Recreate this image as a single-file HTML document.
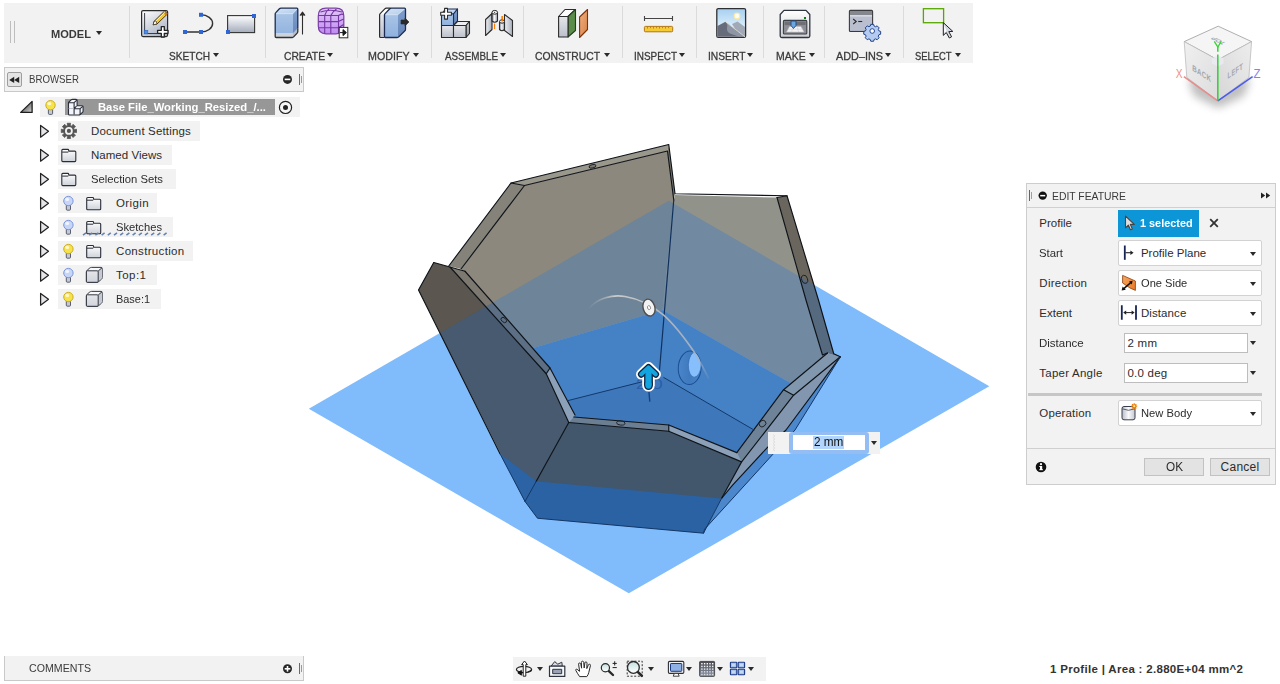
<!DOCTYPE html>
<html><head><meta charset="utf-8"><title>Fusion 360 - Edit Feature</title>
<style>
html,body{margin:0;padding:0;background:#fff;}
body{width:1280px;height:684px;position:relative;overflow:hidden;font-family:"Liberation Sans",sans-serif;}
.t{position:absolute;white-space:nowrap;line-height:16px;height:16px;font-family:"Liberation Sans",sans-serif;}
.abs{position:absolute;}
.panel{position:absolute;background:#f2f2f2;}
.sep{position:absolute;width:1.5px;background:#dbdbdb;top:6px;height:52px;margin-left:-0.25px;}
.arr{position:absolute;width:0;height:0;border-left:3px solid transparent;border-right:3px solid transparent;border-top:4px solid #2a2a2a;}
.rowbg{position:absolute;background:#f2f2f2;height:20px;}
.dd{position:absolute;background:#fff;border:1px solid #d2d2d2;border-radius:2px;box-sizing:border-box;}
.inp{position:absolute;background:#fff;border:1px solid #bdbdbd;box-sizing:border-box;}
.btn{position:absolute;background:#e3e3e3;border:1px solid #c2c2c2;box-sizing:border-box;}
svg{position:absolute;overflow:visible;}
</style></head>
<body>
<!-- canvas -->
<svg style="left:0;top:0" width="1280" height="684" viewBox="0 0 1280 684">
<defs>
<clipPath id="pl"><polygon points="668.8,200.7 989.3,386.2 628.8,593.3 308.8,408.8"/></clipPath>
</defs>
<polygon points="668.8,200.7 989.3,386.2 628.8,593.3 308.8,408.8" fill="#80bbfb"/>
<!-- ===== outside-plane colours ===== -->
<g stroke-linejoin="round">
<!-- back-left wall inner face -->
<polygon points="524.5,185.5 667.5,151 673.75,200 662.5,310 533,348 461,269" fill="#8c887d"/>
<!-- back-left top rim -->
<polygon points="511,183 668.75,144.5 667.5,151 524.5,185.5" fill="#9a978d"/>
<!-- back-left left rim -->
<polygon points="511,183 524.5,185.5 461,269 448.75,266" fill="#85827a"/>
<!-- back-left right end face -->
<polygon points="668.75,144.5 675,193.75 673.75,200 667.5,151" fill="#7d7a71"/>
<!-- back-right wall inner face -->
<polygon points="673.75,200 675,195 777,197.5 806.25,301 822.5,355 827.5,353 791.4,383.6 662.5,310" fill="#91938b"/>
<!-- back-right end face -->
<polygon points="787,195.75 818.75,301 833.75,353.75 840.3,356.8 827.5,353 822.5,355 806.25,301 777,197.5" fill="#6b665d"/>
<!-- left-front outer panel -->
<polygon points="433.75,262.5 450,267 546.25,373.75 568.75,422.5 536.25,481.25 525,501.5 418.5,290" fill="#5b564f"/>
<!-- left-front rim top -->
<polygon points="450,267 465,271.25 550,368 546.25,373.75" fill="#7d7970"/>
</g>
<!-- ===== inside-plane colours ===== -->
<g clip-path="url(#pl)">
<polygon points="524.5,185.5 667.5,151 673.75,200 662.5,310 533,348 461,269" fill="#6e8499"/>
<polygon points="673.75,200 675,195 777,197.5 806.25,301 822.5,355 827.5,353 791.4,383.6 662.5,310" fill="#7189a1"/>
<polygon points="787,195.75 818.75,301 833.75,353.75 840.3,356.8 827.5,353 822.5,355 806.25,301 777,197.5" fill="#55697f"/>
<polygon points="433.75,262.5 450,267 546.25,373.75 568.75,422.5 536.25,481.25 525,501.5 418.5,290" fill="#475a70"/>
<polygon points="450,267 465,271.25 550,368 546.25,373.75" fill="#5c6f85"/>
<!-- floor -->
<polygon points="662.5,310 791.4,383.6 736.8,452.6 668.75,425 573.75,417 575,415 550,368 533,348" fill="#4581c5"/>
<polygon points="567.4,400.75 659,377.5 663.75,377.5 754,430 736.8,452.6 668.75,425 573.75,417" fill="#3e78bb"/>
<!-- chamfer left -->
<polygon points="546.25,373.75 550,368 575,415 573.75,417 568.75,422.5" fill="#8ca0b8"/>
<!-- front rim -->
<polygon points="568.75,422.5 573.75,417 668.75,425 668.75,431.25" fill="#6b7e92"/>
<polygon points="668.75,425 736.8,452.6 741.6,461.9 668.75,431.25" fill="#8ca0b8"/>
<!-- front panel -->
<polygon points="568.75,422.5 668.75,431.25 741.6,461.9 721.5,498.5 715,510 530.3,492 536.25,481.25" fill="#42566c"/>
<polygon points="536.25,481.25 721.5,498.5 703.5,533.2 537.5,518.25 525,501.5" fill="#2a62a3"/>
<polygon points="500,453.75 536.25,481.25 525,501.5" fill="#2b63a5"/>
<!-- right-front rim -->
<polygon points="827.5,353 840.3,356.8 793.6,395.2 783.6,389.7" fill="#8197ae"/>
<polygon points="783.6,389.7 793.6,395.2 741.6,461.9 736.8,452.6" fill="#6f8398"/>
<polygon points="840.3,356.8 795,430 772.6,454.6 704.6,529.2 703.5,533.2 721.5,498.5 741.6,461.9 793.6,395.2" fill="#4c87cb"/>
<polygon points="840.3,356.8 793.6,395.2 741.6,461.9 721.5,498.5 732.4,485.3 767.5,447.3 786,430" fill="#8297af"/>
</g>
<!-- ===== edges ===== -->
<g fill="none" stroke="#0e1318" stroke-width="1.15" stroke-linejoin="round" stroke-linecap="round">
<path d="M511,183 L668.75,144.5 L675,193.75 L787,195.75 L818.75,301 L833.75,353.75 L840.3,356.8"/>
<path d="M524.5,185.5 L667.5,151 L673.75,200"/>
<path d="M511,183 L448.75,266 M524.5,185.5 L461,269 M511,183 L524.5,185.5"/>
<path d="M433.75,262.5 L450,267 L465,271.25"/>
<path d="M433.75,262.5 L418.5,290 L500,453.75"/>
<path d="M450,267 L546.25,373.75 L568.75,422.5 L536.25,481.25"/>
<path d="M465,271.25 L550,368 L575,415"/>
<path d="M546.25,373.75 L550,368"/>
<path d="M777,197.5 L806.25,301 L822.5,355 L827.5,353"/>
<path d="M787,195.75 L777,197.5"/>
<path d="M568.75,422.5 L668.75,431.25 L741.6,461.9 L721.5,498.5"/>
<path d="M573.75,417 L668.75,425 L736.8,452.6"/>
<path d="M668.75,425 L668.75,431.25"/>
<path d="M827.5,353 L783.6,389.7 L736.8,452.6"/>
<path d="M840.3,356.8 L793.6,395.2 L741.6,461.9"/>
<path d="M783.6,389.7 L793.6,395.2"/>
<path d="M840.3,356.8 L786,430 L767.5,447.3 L732.4,485.3 L721.5,498.5"/>
</g>
<g fill="none" stroke="#12386a" stroke-width="1" stroke-linecap="round">
<path d="M673.75,200 L658.9,377.5" stroke="#10305c" stroke-width="1.2"/>
<path d="M567.4,400.75 L659,377.5"/>
<path d="M500,453.75 L525,501.5 L537.5,518.25 L703.5,533.2 L721.5,498.5 M536.25,481.25 L525,501.5" stroke="#123766" stroke-width="1"/>
<path d="M840.3,356.8 L795,430 L772.6,454.6 L704.6,529.2 L703.5,533.2" stroke="#123766" stroke-width="1"/>
<path d="M663.75,377.5 L754,430"/>
</g>
<!-- big hole -->
<defs><clipPath id="holeclip"><ellipse cx="689.7" cy="367.8" rx="11.2" ry="16.5" transform="rotate(3 689.7 367.8)"/></clipPath>
<linearGradient id="gHole" x1="0" y1="0" x2="1" y2="0"><stop offset="0" stop-color="#4a86cb"/><stop offset="0.5" stop-color="#3f79be"/><stop offset="1" stop-color="#4a86cb"/></linearGradient></defs>
<g>
<ellipse cx="689.7" cy="367.8" rx="11.4" ry="16.7" transform="rotate(3 689.7 367.8)" fill="url(#gHole)" stroke="#1d4e95" stroke-width="1"/>
<g clip-path="url(#holeclip)"><ellipse cx="694.8" cy="364.6" rx="6.4" ry="12.6" transform="rotate(3 694.8 364.6)" fill="#86bffc" stroke="#2f66ae" stroke-width="0.6"/></g>
</g>
<!-- small holes -->
<g fill="none" stroke="#1b1f24" stroke-width="0.9">
<ellipse cx="592.5" cy="166.3" rx="3.6" ry="1.7" transform="rotate(-13 592.5 166.3)" fill="#7a776f"/>
<ellipse cx="503.8" cy="320" rx="3.2" ry="2.1" transform="rotate(40 503.8 320)"/>
<ellipse cx="620.8" cy="423" rx="4.2" ry="2.1" transform="rotate(5 620.8 423)"/>
<ellipse cx="762.5" cy="423.6" rx="3.6" ry="3" transform="rotate(-40 762.5 423.6)"/>
<ellipse cx="804.6" cy="279.3" rx="2.9" ry="4.2" transform="rotate(-18 804.6 279.3)"/>
</g>
<!-- manipulator arc -->
<defs><linearGradient id="arcg" gradientUnits="userSpaceOnUse" x1="588" y1="308" x2="712" y2="380">
<stop offset="0" stop-color="#c8c8c8" stop-opacity="0"/><stop offset="0.12" stop-color="#cfcfcf" stop-opacity="0.95"/><stop offset="0.45" stop-color="#b4b4b4"/><stop offset="0.8" stop-color="#a8b4c4" stop-opacity="0.9"/><stop offset="1" stop-color="#a8b4c4" stop-opacity="0"/></linearGradient></defs>
<path d="M589,308 C598,298 612,294.5 625,296.5 C640,299 654,307 663.7,315.2 C676,326 688,343 695,353.2 C700,361 705,371 709,379" fill="none" stroke="url(#arcg)" stroke-width="1.7"/>
<ellipse cx="649" cy="307.6" rx="5.9" ry="8.6" transform="rotate(-16 649 307.6)" fill="#f2f2f2" stroke="#4e4e4e" stroke-width="1.4"/>
<ellipse cx="649" cy="307.6" rx="1.5" ry="2" transform="rotate(-16 649 307.6)" fill="#fff" stroke="#7c7c7c" stroke-width="0.8"/>
<!-- faint dimension text + tick under arrow -->
<text x="635.8" y="389.2" font-family="Liberation Sans, sans-serif" font-size="14.5" fill="#2a60aa" textLength="27" lengthAdjust="spacingAndGlyphs">2.0</text>
<path d="M649,392 L649.8,401.6" stroke="#173f7a" stroke-width="1.4" fill="none"/>
<!-- arrow -->
<g fill="none" stroke-linecap="round" stroke-linejoin="round">
<path d="M648.5,373 V385.2" stroke="#fff" stroke-width="12.6"/>
<path d="M641.3,374.3 L648.5,367.4 L655.7,374.3" stroke="#fff" stroke-width="10.6"/>
<path d="M648.5,373 V385.2" stroke="#0b2545" stroke-width="8.8" stroke-linecap="butt"/>
<path d="M648.5,384 V385.6" stroke="#0b2545" stroke-width="8.8"/>
<path d="M641.3,374.3 L648.5,367.4 L655.7,374.3" stroke="#0b2545" stroke-width="6.8"/>
<path d="M648.5,369.6 V385.4" stroke="#12a5e0" stroke-width="6.2" stroke-linecap="butt"/>
<path d="M648.5,384.6 V385.6" stroke="#12a5e0" stroke-width="6.2"/>
<path d="M641.3,374.3 L648.5,367.4 L655.7,374.3" stroke="#12a5e0" stroke-width="4.2"/>
</g>
</svg>
<!-- floating input -->
<div class="abs" style="left:768px;top:432px;width:112px;height:21.8px;background:#f2f2f2;"></div>
<svg style="left:770px;top:433px" width="8" height="20" viewBox="0 0 8 20"><path d="M3,1.5 L5,3 L3,4.5 L5,6 L3,7.5 L5,9 L3,10.5 L5,12 L3,13.5 L5,15 L3,16.5 L5,18" fill="none" stroke="#dcdcdc" stroke-width="0.9"/></svg>
<div class="abs" style="left:789px;top:431.8px;width:80.2px;height:22.2px;background:#94bdf4;border-radius:3px;"></div>
<div class="abs" style="left:792.5px;top:435px;width:72.6px;height:15.2px;background:#fff;"></div>
<div class="abs" style="left:813.3px;top:436.2px;width:30.5px;height:12.7px;background:#b2d5fc;"></div>
<div class="arr" style="left:871px;top:441px;"></div>
<!-- view cube -->
<svg style="left:1160px;top:10px" width="120" height="110" viewBox="1160 10 120 110">
<defs>
<filter id="fBlur" x="-30%" y="-30%" width="160%" height="160%"><feGaussianBlur stdDeviation="4"/></filter>
<linearGradient id="gcL" x1="0" y1="0" x2="1" y2="1"><stop offset="0" stop-color="#f0f0f0"/><stop offset="1" stop-color="#dcdcdc"/></linearGradient>
<linearGradient id="gcR" x1="1" y1="0" x2="0" y2="1"><stop offset="0" stop-color="#ededed"/><stop offset="1" stop-color="#d6d6d6"/></linearGradient>
</defs>
<polygon points="1188,80 1218,68 1250,80 1244,96 1218,108 1194,96" fill="#8a8a8a" opacity="0.55" filter="url(#fBlur)"/>
<polygon points="1218.2,26.2 1251.6,41.6 1217.8,59.9 1184.2,41.6" fill="#f5f5f5" stroke="#8e8e8e" stroke-width="0.7" stroke-linejoin="round"/>
<polygon points="1184.2,41.6 1217.8,59.9 1217.8,100.8 1186.8,77.4" fill="url(#gcL)" stroke="#b4b4b4" stroke-width="0.7" stroke-linejoin="round"/>
<polygon points="1217.8,59.9 1251.6,41.6 1248.9,77.4 1217.8,100.8" fill="url(#gcR)" stroke="#b4b4b4" stroke-width="0.7" stroke-linejoin="round"/>
<polygon points="1217.8,55.5 1223.5,58.2 1223.5,63.5 1217.8,66.5 1212,63.5 1212,58.2" fill="#e9ebf2" opacity="0.9"/>
<text transform="matrix(1,0.62,0,1,1192.2,70.6)" font-family="Liberation Sans, sans-serif" font-size="8.6" font-weight="bold" fill="#a3a7b0" letter-spacing="0.4" textLength="19" lengthAdjust="spacingAndGlyphs">BACK</text>
<text transform="matrix(1,-0.66,0,1,1227.6,79)" font-family="Liberation Sans, sans-serif" font-size="8.6" font-weight="bold" fill="#a3a7b0" letter-spacing="0.4" textLength="15.5" lengthAdjust="spacingAndGlyphs">LEFT</text>
<text transform="matrix(-0.68,-0.37,0.68,-0.31,1226.3,43.1)" font-family="Liberation Sans, sans-serif" font-size="8.6" font-weight="bold" fill="#a3a7b0">TOP</text>
<path d="M1183.9,76.7 L1217.8,100.8" stroke="#e88c8c" stroke-width="1.5" fill="none"/>
<path d="M1217.8,100.8 L1252.6,76.7" stroke="#4a5af0" stroke-width="1.5" fill="none"/>
<path d="M1217.8,100.8 V54.6 M1217.8,51.8 V46.6" stroke="#34d434" stroke-width="1.5" fill="none"/>
<path d="M1214.3,41.4 L1217.8,47 L1221.3,41.4" stroke="#34d434" stroke-width="1.3" fill="none"/>
<text x="1175.7" y="78" font-family="Liberation Sans, sans-serif" font-size="13" fill="#f08f8f" textLength="6.8" lengthAdjust="spacingAndGlyphs">X</text>
<text x="1253.6" y="78" font-family="Liberation Sans, sans-serif" font-size="13" fill="#7f84f4" textLength="7" lengthAdjust="spacingAndGlyphs">Z</text>
</svg>
<!-- toolbar -->
<div class="panel" style="left:4px;top:3px;width:969px;height:60px;"></div>
<div class="abs" style="left:10px;top:21px;width:1px;height:22px;background:#bdbdbd;"></div>
<div class="abs" style="left:14px;top:21px;width:1px;height:22px;background:#bdbdbd;"></div>
<div class="sep" style="left:129px;"></div>
<div class="sep" style="left:265px;"></div>
<div class="sep" style="left:357px;"></div>
<div class="sep" style="left:431px;"></div>
<div class="sep" style="left:523px;"></div>
<div class="sep" style="left:622px;"></div>
<div class="sep" style="left:696px;"></div>
<div class="sep" style="left:763px;"></div>
<div class="sep" style="left:824px;"></div>
<div class="sep" style="left:903px;"></div>
<div class="arr" style="left:96px;top:31px;"></div>
<div class="arr" style="left:212.7px;top:52.8px;"></div>
<div class="arr" style="left:326.7px;top:52.8px;"></div>
<div class="arr" style="left:412.7px;top:52.8px;"></div>
<div class="arr" style="left:500.2px;top:52.8px;"></div>
<div class="arr" style="left:603.7px;top:52.8px;"></div>
<div class="arr" style="left:679.2px;top:52.8px;"></div>
<div class="arr" style="left:746.7px;top:52.8px;"></div>
<div class="arr" style="left:808.7px;top:52.8px;"></div>
<div class="arr" style="left:885.2px;top:52.8px;"></div>
<div class="arr" style="left:955.2px;top:52.8px;"></div>
<!-- ICONS-START -->
<svg style="left:0;top:0" width="980" height="64" viewBox="0 0 980 64">
<defs>
<linearGradient id="gSk" x1="0" y1="0" x2="0.6" y2="1"><stop offset="0" stop-color="#ffffff"/><stop offset="1" stop-color="#aeb6c6"/></linearGradient>
<linearGradient id="gRc" x1="0" y1="0" x2="0" y2="1"><stop offset="0" stop-color="#ffffff"/><stop offset="1" stop-color="#a4acbc"/></linearGradient>
<linearGradient id="gBf" x1="0" y1="0" x2="0" y2="1"><stop offset="0" stop-color="#a9c4e6"/><stop offset="1" stop-color="#8fb1de"/></linearGradient>
<linearGradient id="gBt" x1="0" y1="0" x2="1" y2="1"><stop offset="0" stop-color="#d4e4f6"/><stop offset="1" stop-color="#b4cdea"/></linearGradient>
<linearGradient id="gBs" x1="0" y1="0" x2="0" y2="1"><stop offset="0" stop-color="#7f9fcf"/><stop offset="1" stop-color="#6585b9"/></linearGradient>
<linearGradient id="gGf" x1="0" y1="0" x2="0" y2="1"><stop offset="0" stop-color="#e4e6ea"/><stop offset="1" stop-color="#bcc0cc"/></linearGradient>
<linearGradient id="gGs" x1="0" y1="0" x2="0" y2="1"><stop offset="0" stop-color="#c4c7d0"/><stop offset="1" stop-color="#9ca1ae"/></linearGradient>
<linearGradient id="gPu" x1="0" y1="0" x2="0" y2="1"><stop offset="0" stop-color="#e2c8f8"/><stop offset="1" stop-color="#c08af2"/></linearGradient>
<linearGradient id="gOr" x1="0" y1="0" x2="1" y2="1"><stop offset="0" stop-color="#f0b080"/><stop offset="1" stop-color="#d88248"/></linearGradient>
<linearGradient id="gSky" x1="0" y1="0" x2="0" y2="1"><stop offset="0" stop-color="#a6cff0"/><stop offset="0.7" stop-color="#e2f1fd"/><stop offset="1" stop-color="#ffffff"/></linearGradient>
<linearGradient id="gMk" x1="0" y1="0" x2="0" y2="1"><stop offset="0" stop-color="#ffffff"/><stop offset="1" stop-color="#cfd0d4"/></linearGradient>
<linearGradient id="gCyl" x1="0" y1="0" x2="1" y2="0"><stop offset="0" stop-color="#8b909c"/><stop offset="0.45" stop-color="#f4f5f7"/><stop offset="1" stop-color="#9a9faa"/></linearGradient>
<linearGradient id="gPl" x1="0" y1="0" x2="1" y2="0"><stop offset="0" stop-color="#eef0f3"/><stop offset="1" stop-color="#a9aebb"/></linearGradient>
</defs>
<!-- create sketch -->
<g>
<rect x="141.6" y="10.6" width="26" height="26" rx="1.5" fill="url(#gSk)" stroke="#2b2b2b" stroke-width="1.2"/>
<path d="M144.6,13 V33.5 H157" fill="none" stroke="#3a3d45" stroke-width="1"/>
<rect x="144.2" y="30.3" width="3.6" height="3.6" fill="#4a90e8" stroke="#2c62c0" stroke-width="0.6"/>
<path d="M153.2,24.8 L154,21.4 L164.6,11 L167.6,13.8 L157,24 Z" fill="#f8c820" stroke="#3a2a10" stroke-width="0.9" stroke-linejoin="round"/>
<path d="M153.2,24.8 L154,21.4 L156.2,21.2 L157,24 Z" fill="#fff" stroke="#3a2a10" stroke-width="0.7" stroke-linejoin="round"/>
<path d="M163,12.6 L164.6,11 L167.6,13.8 L166,15.4 Z" fill="#c87838"/>
<path d="M155.6,21.4 L165,12.2" stroke="#fff4b0" stroke-width="0.9"/>
<path d="M161.3,26.6 h3 v3.7 h3.7 v3 h-3.7 v3.7 h-3 v-3.7 h-3.7 v-3 h3.7 z" fill="#fff" stroke="#222" stroke-width="1.3" stroke-linejoin="round"/>
</g>
<!-- arc -->
<g>
<path d="M185,32 H201 A11.6,8.6 0 0 0 201,14.8" fill="none" stroke="#333" stroke-width="1.4"/>
<rect x="183" y="30" width="4" height="4" fill="#2f66d4"/><rect x="199" y="30" width="4" height="4" fill="#2f66d4"/><rect x="199" y="12.8" width="4" height="4" fill="#2f66d4"/>
</g>
<!-- rectangle -->
<g>
<rect x="227.6" y="15.6" width="27" height="17" fill="url(#gRc)" stroke="#333" stroke-width="1.1"/>
<rect x="226" y="30" width="4" height="4" fill="#2f66d4"/><rect x="252" y="14" width="4" height="4" fill="#2f66d4"/>
</g>
<!-- extrude -->
<g stroke-linejoin="round">
<polygon points="275.2,13.5 280,8.2 297.8,8.2 293,13.5" fill="url(#gBt)"/>
<polygon points="293,13.5 297.8,8.2 297.8,32.5 293,37.5" fill="url(#gBs)"/>
<rect x="275.2" y="13.5" width="17.8" height="24" fill="url(#gBf)"/>
<path d="M275.6,13.7 H292.8 L297.4,8.6" fill="none" stroke="#dbe8f8" stroke-width="0.7"/>
<polygon points="275.8,33 292.9,33 292.9,36.9 275.8,36.9" fill="#cfd2da"/>
<polygon points="293,33 297.4,28.6 297.4,32.2 293,36.9" fill="#b9bdc8"/>
<path d="M275.2,33 V14 Q275.2,13.2 275.8,12.6 L279.4,8.8 Q280,8.2 281,8.2 H296.8 Q297.8,8.2 297.8,9.2 V28.5" fill="none" stroke="#1c2c52" stroke-width="1.3"/>
<path d="M275.2,33 V36.5 Q275.2,37.5 276.2,37.5 H292.4 Q293,37.5 293.6,36.9 L297.2,33.1 Q297.8,32.5 297.8,31.6 V28.5" fill="none" stroke="#333" stroke-width="1.3"/>
<path d="M302.5,34.5 V13" stroke="#2e2e2e" stroke-width="1.1" fill="none"/>
<path d="M300,15.5 L302.5,12.2 L305,15.5" stroke="#2e2e2e" stroke-width="1.1" fill="#2e2e2e"/>
</g>
<!-- form -->
<g>
<path d="M318.3,16 Q318.3,8.2 326,8.2 H336 Q343.8,8.2 343.8,16 V26 Q343.8,33.8 336,33.8 H326 Q318.3,33.8 318.3,26 Z" fill="url(#gPu)" stroke="#7a3fa6" stroke-width="1.2"/>
<path d="M318.5,15.5 H338.5 M318.5,21.6 H338.5 M318.5,27.8 H338.5 M324.7,15.5 V33.6 M330.8,15.5 V33.6 M338.5,15.5 V33.6 M338.5,15.5 Q342.5,13 343.5,15 M338.5,21.6 L343.6,19 M338.5,27.8 L343.6,24.5 M324.7,15.5 Q326,11 329,9 M330.8,15.5 Q333,11 336.5,9 M320.5,12 Q330,8.5 342,12" fill="none" stroke="#7436a2" stroke-width="1.1"/>
<rect x="339.2" y="27.4" width="8.6" height="10.4" fill="#fff" stroke="#2b2b2b" stroke-width="1"/>
<path d="M340,32.6 H343 M343,29.6 L346.4,32.6 L343,35.6 Z" fill="#1a1a1a" stroke="#1a1a1a" stroke-width="1"/>
</g>
<!-- press pull -->
<g stroke-linejoin="round">
<polygon points="379.6,14.5 385.6,8.2 390.5,8.2 384.5,14.5" fill="#fff"/>
<rect x="379.6" y="14.5" width="5" height="23" fill="url(#gGf)"/>
<path d="M384.5,37.5 H380.6 Q379.6,37.5 379.6,36.5 V15 Q379.6,14.2 380.2,13.6 L384.8,8.8 Q385.4,8.2 386.4,8.2 H390.5" fill="none" stroke="#2b2b2b" stroke-width="1.2"/>
<polygon points="384.5,14.5 390.5,8.2 405.5,8.2 398,14.5" fill="url(#gBt)"/>
<polygon points="398,14.5 405.5,8.2 405.5,30 398,37.5" fill="url(#gBs)"/>
<rect x="384.5" y="14.5" width="13.5" height="23" fill="url(#gBf)"/>
<path d="M384.9,14.7 H397.8 L405,8.6" fill="none" stroke="#dbe8f8" stroke-width="0.7"/>
<path d="M384.5,15 Q384.5,14.2 385.1,13.6 L389.8,8.8 Q390.4,8.2 391.4,8.2 H404.5 Q405.5,8.2 405.5,9.2 V29.4 Q405.5,30.2 404.9,30.8 L398.8,36.9 Q398.2,37.5 397.2,37.5 H385.5 Q384.5,37.5 384.5,36.5 Z" fill="none" stroke="#1c2c52" stroke-width="1.3"/>
<path d="M401,20 H405 V18 L409,22 L405,26 V24 H401 Z" fill="#2a2a2a" stroke="#2a2a2a" stroke-width="0.6"/>
</g>
<!-- new component -->
<g stroke-linejoin="round">
<polygon points="441.5,14 445.5,9 457.5,9 453.5,14" fill="url(#gBt)" stroke="#1c2c52" stroke-width="1.1"/>
<polygon points="453.5,14 457.5,9 457.5,21 453.5,25.5" fill="url(#gBs)" stroke="#1c2c52" stroke-width="1.1"/>
<rect x="441.5" y="14" width="12" height="11.5" fill="url(#gBf)" stroke="#1c2c52" stroke-width="1.1"/>
<rect x="441.5" y="25.5" width="12" height="12" fill="url(#gGf)" stroke="#2b2b2b" stroke-width="1.1"/>
<polygon points="453.5,25.5 457.5,21.5 469.5,21.5 466,25.5" fill="#eceef1" stroke="#2b2b2b" stroke-width="1.1"/>
<polygon points="466,25.5 469.5,21.5 469.5,33.5 466,37.5" fill="url(#gGs)" stroke="#2b2b2b" stroke-width="1.1"/>
<rect x="453.5" y="25.5" width="12.5" height="12" fill="url(#gGf)" stroke="#2b2b2b" stroke-width="1.1"/>
<path d="M444.6,8.4 h2.9 v3.9 h3.9 v2.9 h-3.9 v3.9 h-2.9 v-3.9 h-3.9 v-2.9 h3.9 z" fill="#fff" stroke="#2b2b2b" stroke-width="1.1"/>
</g>
<!-- joint -->
<g stroke-linejoin="round">
<polygon points="485.6,19.5 492,13.5 492,29.5 485.6,35.5" fill="url(#gPl)" stroke="#2b2b2b" stroke-width="1.1"/>
<path d="M492,12.5 V21 Q494.7,23.5 497.5,21 V12.5" fill="url(#gCyl)" stroke="#2b2b2b" stroke-width="1.1"/>
<ellipse cx="494.75" cy="12.3" rx="2.75" ry="1.9" fill="#f6f6f8" stroke="#2b2b2b" stroke-width="1"/>
<circle cx="494.6" cy="12.3" r="0.6" fill="#333"/>
<path d="M494.5,23.6 V29" stroke="#ff7a00" stroke-width="1.2"/>
<path d="M502.2,16 V22" stroke="#ff7a00" stroke-width="1.2"/>
<polygon points="504.5,14.5 512.5,20.5 512.5,36.5 504.5,30.5" fill="url(#gPl)" stroke="#2b2b2b" stroke-width="1.1"/>
<path d="M499.5,21.5 V29.5 Q502,32 504.5,29.5 V21.5" fill="url(#gCyl)" stroke="#2b2b2b" stroke-width="1.1"/>
<ellipse cx="502" cy="21.5" rx="2.5" ry="1.7" fill="#e8e9ec" stroke="#2b2b2b" stroke-width="1"/>
<path d="M502.2,16 V21.4" stroke="#ff7a00" stroke-width="1.2"/>
</g>
<!-- construct -->
<g stroke-linejoin="round">
<polygon points="558.6,16.5 565,9.5 575.5,9.5 568,16.5" fill="#fdfdfd" stroke="#2b2b2b" stroke-width="1.1"/>
<polygon points="568,16.5 575.5,9.5 575.5,30.5 568,37" fill="#5b8c4a" stroke="#23401c" stroke-width="1.1"/>
<rect x="558.6" y="16.5" width="9.4" height="20.5" fill="url(#gGf)" stroke="#2b2b2b" stroke-width="1.1"/>
<polygon points="579.6,17 587.5,9.5 587.5,29.5 579.6,37.5" fill="url(#gOr)" stroke="#7e3008" stroke-width="1.1"/>
</g>
<!-- inspect -->
<g>
<path d="M644.5,18.5 H672.5 M644.5,16 V21 M672.5,16 V21" stroke="#444" stroke-width="1.1" fill="none"/>
<rect x="644.4" y="26.4" width="28.3" height="5.4" rx="1" fill="#f6ca34" stroke="#a8690a" stroke-width="0.9"/>
<path d="M647.5,27 v1.6 M650.5,27 v1.2 M653.5,27 v1.6 M656.5,27 v1.2 M659.5,27 v1.6 M662.5,27 v1.2 M665.5,27 v1.6 M668.5,27 v1.2" stroke="#b07a10" stroke-width="0.8"/>
</g>
<!-- insert -->
<g>
<rect x="716.8" y="8.6" width="28.8" height="28.8" rx="1.5" fill="url(#gSky)" stroke="#2f2f33" stroke-width="1.3"/>
<circle cx="737" cy="16" r="3.4" fill="#fbe9a6"/><circle cx="737" cy="16" r="2.2" fill="#fffef4"/>
<polygon points="732,24 737.5,21.4 745,27 745,36.8 740,36.8" fill="#a2a9b6"/>
<polygon points="717.4,26 725.5,21.8 745,36.8 717.4,36.8" fill="#666c7a"/>
<path d="M725.5,21.8 Q728,24 727,28 Q726.5,31.5 730,33.5 L739,36.8 L745,36.8 Z" fill="#8e95a4"/>
<path d="M725.5,21.8 L745,36.8" stroke="#f4ecd8" stroke-width="0.7"/>
</g>
<!-- make -->
<g stroke-linejoin="round">
<path d="M784,10.4 H806 L809.8,14.5 V36 Q809.8,37.5 808.3,37.5 H781.7 Q780.2,37.5 780.2,36 V14.5 Z" fill="url(#gMk)" stroke="#2e3440" stroke-width="1.3"/>
<rect x="783.4" y="20.4" width="23.4" height="13.6" rx="1" fill="#8d8f94" stroke="#3c3f46" stroke-width="1.1"/>
<rect x="784.6" y="21.6" width="21" height="3.5" fill="#6e7076"/>
<polygon points="789.5,26.5 801,26.5 804,32 786.5,32" fill="#f4f4f6" stroke="#b8b8c0" stroke-width="0.5"/>
<path d="M788,29.2 H802.6 M793,26.5 L791.6,32 M797.2,26.5 L798.6,32" stroke="#c8c8d0" stroke-width="0.5"/>
<polygon points="791,21 796,21 796,25.5 793.5,28.5 791,25.5" fill="#6aa6e0" stroke="#1a4a94" stroke-width="0.9"/>
<rect x="804" y="17" width="2" height="2" fill="#0a7a0a"/>
</g>
<!-- add-ins -->
<g>
<rect x="849.4" y="10.4" width="23.2" height="21" rx="1" fill="url(#gRc)" stroke="#3a3a3e" stroke-width="1.1"/>
<rect x="850" y="11" width="22" height="4.4" fill="#85878e"/>
<rect x="850" y="15.4" width="22" height="15.4" fill="#b9bfce"/>
<rect x="850" y="15.4" width="22" height="1" fill="#e6e8ee"/>
<path d="M853.2,19 L856.2,21.5 L853.2,24" fill="none" stroke="#2b2b2b" stroke-width="1.1"/>
<path d="M858.2,21.5 H862.2" stroke="#2b2b2b" stroke-width="1.1"/>
<g transform="translate(872.2,31)">
<path d="M-1.5,-7 h3 l0.5,1.8 l1.5,0.7 l1.7,-0.9 l2.1,2.1 l-0.9,1.7 l0.7,1.5 l1.8,0.5 v3 l-1.8,0.5 l-0.7,1.5 l0.9,1.7 l-2.1,2.1 l-1.7,-0.9 l-1.5,0.7 l-0.5,1.8 h-3 l-0.5,-1.8 l-1.5,-0.7 l-1.7,0.9 l-2.1,-2.1 l0.9,-1.7 l-0.7,-1.5 l-1.8,-0.5 v-3 l1.8,-0.5 l0.7,-1.5 l-0.9,-1.7 l2.1,-2.1 l1.7,0.9 l1.5,-0.7 z" fill="#b4ccf2" stroke="#1b3a84" stroke-width="1" stroke-linejoin="round" transform="scale(0.95)"/>
<circle cx="0" cy="0" r="2.3" fill="#fff" stroke="#1b3a84" stroke-width="0.9"/>
</g>
</g>
<!-- select -->
<g>
<rect x="923.4" y="8.7" width="20.2" height="14" fill="none" stroke="#58a700" stroke-width="1.3"/>
<path d="M943.3,22.6 V35.4 L946.3,32.6 L949.3,38 L951.6,36.8 L948.8,31.6 L952.8,31.4 Z" fill="#d4d8e2" stroke="#222" stroke-width="1" stroke-linejoin="round"/>
<path d="M944.2,25 V33 L946.5,31 Z" fill="#fff"/>
</g>
</svg>
<!-- ICONS-END -->
<!-- browser -->
<div class="panel" style="left:4px;top:67px;width:300px;height:25px;box-sizing:border-box;border:1px solid #c9c9c9;"></div>
<div class="abs" style="left:7px;top:72px;width:15px;height:15px;box-sizing:border-box;border:1px solid #9e9e9e;border-radius:2px;background:#e4e4e4;"></div>
<svg style="left:7px;top:72px" width="16" height="15" viewBox="0 0 16 15"><path d="M7.2 4.8v6.2L2.2 7.9zM12.2 4.8v6.2L7.2 7.9z" fill="#222"/></svg>
<svg style="left:282px;top:74px" width="12" height="12" viewBox="0 0 12 12"><circle cx="5.5" cy="5.4" r="4.5" fill="#262626"/><rect x="2.7" y="4.6" width="5.6" height="1.6" fill="#fff"/></svg>
<div class="abs" style="left:299px;top:73.8px;width:1px;height:11px;background:#6a6a6a;"></div>
<div class="abs" style="left:301px;top:76px;width:1px;height:7px;background:#9a9a9a;"></div>
<!-- root row -->
<div class="rowbg" style="left:40px;top:97px;width:260px;"></div>
<div class="abs" style="left:65px;top:99px;width:210px;height:16px;background:#979797;"></div>
<!-- rows -->
<div class="rowbg" style="left:58px;top:121px;width:142px;"></div>
<div class="rowbg" style="left:58px;top:145px;width:114px;"></div>
<div class="rowbg" style="left:58px;top:169px;width:118px;"></div>
<div class="rowbg" style="left:58px;top:193px;width:99px;"></div>
<div class="rowbg" style="left:58px;top:217px;width:115px;"></div>
<div class="rowbg" style="left:58px;top:241px;width:135px;"></div>
<div class="rowbg" style="left:58px;top:265px;width:99px;"></div>
<div class="rowbg" style="left:58px;top:289px;width:103px;"></div>
<svg style="left:0;top:0" width="320" height="320" viewBox="0 0 320 320"><defs><linearGradient id="gFo" x1="0" y1="0" x2="0" y2="1"><stop offset="0" stop-color="#ffffff"/><stop offset="1" stop-color="#ced2da"/></linearGradient><linearGradient id="gFo2" x1="0" y1="0" x2="0" y2="1"><stop offset="0" stop-color="#e4e6ea"/><stop offset="1" stop-color="#d0d3da"/></linearGradient><linearGradient id="gTr" x1="0" y1="0" x2="1" y2="1"><stop offset="0.3" stop-color="#5a5a5a"/><stop offset="1" stop-color="#d8d8d8"/></linearGradient></defs><path d="M32.1,101.4 V112.4 H20.7 Z" fill="url(#gTr)" stroke="#1e1e1e" stroke-width="1.3" stroke-linejoin="round"/><g><path d="M48.40,109.40 h4.2 v4 q0,1 -1,1 h-2.2 q-1,0 -1,-1 z" fill="#c4c9d6" stroke="#4c5060" stroke-width="0.9"/><circle cx="50.50" cy="105.20" r="4.7" fill="#f7e248" stroke="#cfae24" stroke-width="1"/><ellipse cx="49.30" cy="103.60" rx="2" ry="1.7" fill="#fffcd8" opacity="0.9"/></g><g stroke="#2a2e3a" stroke-width="1.1" stroke-linejoin="round"><path d="M68.50,102.50 l2.6,-2.6 q0.5,-0.5 1.4,-0.5 h3.6 q1,0 1,1 v5.4 h5 q1,0 1,1 v4.2 q0,0.8 -0.6,1.3 l-2.4,2.2 q-0.6,0.5 -1.5,0.5 h-9.1 q-1,0 -1,-1 z" fill="#f4f5f8"/><path d="M68.50,102.70 h5.6 v11.8 M74.10,102.70 l2.7,-2.6 M74.10,108.70 h6 v5.8 M80.10,108.70 l2.7,-2.4 M74.10,108.70 l2.4,-2.6" fill="none"/><path d="M68.50,108.50 h5.6" fill="none" stroke-width="0.7" stroke="#aab"/></g><circle cx="285.5" cy="107.4" r="6.1" fill="#f6f6f6" stroke="#222" stroke-width="1.2"/><circle cx="285.5" cy="107.4" r="2.5" fill="#222"/><path d="M40.6,125.40 V137.20 L48.5,131.30 Z" fill="#e6e6ea" stroke="#222" stroke-width="1.25" stroke-linejoin="round"/><path d="M40.6,149.40 V161.20 L48.5,155.30 Z" fill="#e6e6ea" stroke="#222" stroke-width="1.25" stroke-linejoin="round"/><path d="M40.6,173.40 V185.20 L48.5,179.30 Z" fill="#e6e6ea" stroke="#222" stroke-width="1.25" stroke-linejoin="round"/><path d="M40.6,197.40 V209.20 L48.5,203.30 Z" fill="#e6e6ea" stroke="#222" stroke-width="1.25" stroke-linejoin="round"/><path d="M40.6,221.40 V233.20 L48.5,227.30 Z" fill="#e6e6ea" stroke="#222" stroke-width="1.25" stroke-linejoin="round"/><path d="M40.6,245.40 V257.20 L48.5,251.30 Z" fill="#e6e6ea" stroke="#222" stroke-width="1.25" stroke-linejoin="round"/><path d="M40.6,269.40 V281.20 L48.5,275.30 Z" fill="#e6e6ea" stroke="#222" stroke-width="1.25" stroke-linejoin="round"/><path d="M40.6,293.40 V305.20 L48.5,299.30 Z" fill="#e6e6ea" stroke="#222" stroke-width="1.25" stroke-linejoin="round"/><polygon points="67.20,123.29 70.60,123.29 70.14,125.44 71.89,126.16 73.08,124.31 75.49,126.72 73.64,127.91 74.36,129.66 76.51,129.20 76.51,132.60 74.36,132.14 73.64,133.89 75.49,135.08 73.08,137.49 71.89,135.64 70.14,136.36 70.60,138.51 67.20,138.51 67.66,136.36 65.91,135.64 64.72,137.49 62.31,135.08 64.16,133.89 63.44,132.14 61.29,132.60 61.29,129.20 63.44,129.66 64.16,127.91 62.31,126.72 64.72,124.31 65.91,126.16 67.66,125.44" fill="#555" stroke="#555" stroke-width="0.8" stroke-linejoin="round"/><circle cx="68.9" cy="130.9" r="3.9" fill="#f2f2f2"/><circle cx="68.9" cy="130.9" r="2.1" fill="#555"/><path d="M62.80,149.40 h5 q0.9,0 0.9,0.9 v0.8 h6.1 q1,0 1,1 v8.5 q0,1 -1,1 h-12 q-1,0 -1,-1 v-10.2 q0,-1 1,-1 z" fill="url(#gFo)" stroke="#2a2e3a" stroke-width="1.1" stroke-linejoin="round"/><path d="M62.10,152.10 h6.2" stroke="#2a2e3a" stroke-width="1" fill="none"/><path d="M62.80,173.40 h5 q0.9,0 0.9,0.9 v0.8 h6.1 q1,0 1,1 v8.5 q0,1 -1,1 h-12 q-1,0 -1,-1 v-10.2 q0,-1 1,-1 z" fill="url(#gFo)" stroke="#2a2e3a" stroke-width="1.1" stroke-linejoin="round"/><path d="M62.10,176.10 h6.2" stroke="#2a2e3a" stroke-width="1" fill="none"/><g><path d="M66.30,205.20 h4.2 v4 q0,1 -1,1 h-2.2 q-1,0 -1,-1 z" fill="#c4c9d6" stroke="#4c5060" stroke-width="0.9"/><circle cx="68.40" cy="201.00" r="4.7" fill="#c7d6f8" stroke="#7c98da" stroke-width="1"/><ellipse cx="67.20" cy="199.40" rx="2" ry="1.7" fill="#f4f7ff" opacity="0.9"/></g><path d="M87.70,197.50 h5 q0.9,0 0.9,0.9 v0.8 h6.1 q1,0 1,1 v8.5 q0,1 -1,1 h-12 q-1,0 -1,-1 v-10.2 q0,-1 1,-1 z" fill="url(#gFo)" stroke="#2a2e3a" stroke-width="1.1" stroke-linejoin="round"/><path d="M87.00,200.20 h6.2" stroke="#2a2e3a" stroke-width="1" fill="none"/><g><path d="M66.30,229.20 h4.2 v4 q0,1 -1,1 h-2.2 q-1,0 -1,-1 z" fill="#c4c9d6" stroke="#4c5060" stroke-width="0.9"/><circle cx="68.40" cy="225.00" r="4.7" fill="#c7d6f8" stroke="#7c98da" stroke-width="1"/><ellipse cx="67.20" cy="223.40" rx="2" ry="1.7" fill="#f4f7ff" opacity="0.9"/></g><path d="M87.70,221.50 h5 q0.9,0 0.9,0.9 v0.8 h6.1 q1,0 1,1 v8.5 q0,1 -1,1 h-12 q-1,0 -1,-1 v-10.2 q0,-1 1,-1 z" fill="url(#gFo)" stroke="#2a2e3a" stroke-width="1.1" stroke-linejoin="round"/><path d="M87.00,224.20 h6.2" stroke="#2a2e3a" stroke-width="1" fill="none"/><g><path d="M66.30,253.20 h4.2 v4 q0,1 -1,1 h-2.2 q-1,0 -1,-1 z" fill="#c4c9d6" stroke="#4c5060" stroke-width="0.9"/><circle cx="68.40" cy="249.00" r="4.7" fill="#f7e248" stroke="#cfae24" stroke-width="1"/><ellipse cx="67.20" cy="247.40" rx="2" ry="1.7" fill="#fffcd8" opacity="0.9"/></g><path d="M87.70,245.50 h5 q0.9,0 0.9,0.9 v0.8 h6.1 q1,0 1,1 v8.5 q0,1 -1,1 h-12 q-1,0 -1,-1 v-10.2 q0,-1 1,-1 z" fill="url(#gFo)" stroke="#2a2e3a" stroke-width="1.1" stroke-linejoin="round"/><path d="M87.00,248.20 h6.2" stroke="#2a2e3a" stroke-width="1" fill="none"/><g><path d="M66.30,277.20 h4.2 v4 q0,1 -1,1 h-2.2 q-1,0 -1,-1 z" fill="#c4c9d6" stroke="#4c5060" stroke-width="0.9"/><circle cx="68.40" cy="273.00" r="4.7" fill="#c7d6f8" stroke="#7c98da" stroke-width="1"/><ellipse cx="67.20" cy="271.40" rx="2" ry="1.7" fill="#f4f7ff" opacity="0.9"/></g><g stroke="#2a2e3a" stroke-width="0.95" stroke-linejoin="round"><path d="M86.40,271.80 q0,-1 0.8,-1.6 l2.6,-2.2 q0.8,-0.6 1.8,-0.6 h9.6 q1,0 1,1 v9.2 q0,1 -0.7,1.6 l-2.8,2.4 q-0.8,0.7 -1.8,0.7 h-9.5 q-1,0 -1,-1 z" fill="#f7f8fa"/><path d="M98.00,271.00 l4,-3.3 v10 l-4,3.6 z" fill="#c6c9d1" stroke="none"/><rect x="86.40" y="270.80" width="11.8" height="11.5" rx="1" fill="url(#gFo2)"/><path d="M98.20,271.00 l3.8,-3.2" fill="none"/></g><g><path d="M66.30,301.20 h4.2 v4 q0,1 -1,1 h-2.2 q-1,0 -1,-1 z" fill="#c4c9d6" stroke="#4c5060" stroke-width="0.9"/><circle cx="68.40" cy="297.00" r="4.7" fill="#f7e248" stroke="#cfae24" stroke-width="1"/><ellipse cx="67.20" cy="295.40" rx="2" ry="1.7" fill="#fffcd8" opacity="0.9"/></g><g stroke="#2a2e3a" stroke-width="0.95" stroke-linejoin="round"><path d="M86.40,295.80 q0,-1 0.8,-1.6 l2.6,-2.2 q0.8,-0.6 1.8,-0.6 h9.6 q1,0 1,1 v9.2 q0,1 -0.7,1.6 l-2.8,2.4 q-0.8,0.7 -1.8,0.7 h-9.5 q-1,0 -1,-1 z" fill="#f7f8fa"/><path d="M98.00,295.00 l4,-3.3 v10 l-4,3.6 z" fill="#c6c9d1" stroke="none"/><rect x="86.40" y="294.80" width="11.8" height="11.5" rx="1" fill="url(#gFo2)"/><path d="M98.20,295.00 l3.8,-3.2" fill="none"/></g><path d="M83.0,235.2 l3,-2.4 M89.2,235.2 l3,-2.4 M95.4,235.2 l3,-2.4 M101.6,235.2 l3,-2.4 M107.8,235.2 l3,-2.4 M114.0,235.2 l3,-2.4 M120.2,235.2 l3,-2.4 M126.4,235.2 l3,-2.4 M132.6,235.2 l3,-2.4 M138.8,235.2 l3,-2.4 M145.0,235.2 l3,-2.4 M151.2,235.2 l3,-2.4 M157.4,235.2 l3,-2.4 M163.6,235.2 l3,-2.4 " stroke="#6482b0" stroke-width="1.5" fill="none"/></svg>

<!-- dialog -->
<div class="panel" style="left:1026px;top:183px;width:250px;height:302px;box-sizing:border-box;border:1px solid #cdcdcd;"></div>
<div class="abs" style="left:1027px;top:207px;width:248px;height:1px;background:#d0d0d0;"></div>
<div class="abs" style="left:1029px;top:190px;width:1px;height:11px;background:#666;"></div>
<div class="abs" style="left:1031px;top:192px;width:1px;height:7px;background:#a0a0a0;"></div>
<svg style="left:1037px;top:190px" width="12" height="12" viewBox="0 0 12 12"><circle cx="5.7" cy="5.6" r="4.2" fill="#111"/><rect x="3.2" y="4.9" width="5" height="1.5" fill="#fff"/></svg>
<svg style="left:1260px;top:191px" width="12" height="10" viewBox="0 0 12 10"><path d="M1 1.6v6l4.2-3zM6 1.6v6l4.2-3z" fill="#222"/></svg>
<!-- profile selected -->
<div class="abs" style="left:1117.5px;top:209.5px;width:81.5px;height:27px;background:#0c96d7;"></div>
<svg style="left:1124px;top:215px" width="12" height="17" viewBox="0 0 12 17"><path d="M1.5 1.2v11.6l2.9-2.7 2 4.6 1.9-.8-2-4.5h4z" fill="#dedede" stroke="#444" stroke-width="1.1" stroke-linejoin="round"/></svg>
<svg style="left:1209px;top:218px" width="10" height="10" viewBox="0 0 10 10"><path d="M1.2 1.2l7.6 7.6M8.8 1.2l-7.6 7.6" stroke="#333" stroke-width="1.8"/></svg>
<!-- dropdowns -->
<div class="dd" style="left:1117.5px;top:240px;width:144px;height:26px;"></div>
<div class="dd" style="left:1117.5px;top:270px;width:144px;height:26px;"></div>
<div class="dd" style="left:1117.5px;top:300px;width:144px;height:26px;"></div>
<div class="dd" style="left:1117.5px;top:400px;width:144px;height:26px;"></div>
<div class="arr" style="left:1249.5px;top:251.5px;"></div>
<div class="arr" style="left:1249.5px;top:281.5px;"></div>
<div class="arr" style="left:1249.5px;top:311.5px;"></div>
<div class="arr" style="left:1249.5px;top:341px;"></div>
<div class="arr" style="left:1249.5px;top:371px;"></div>
<div class="arr" style="left:1249.5px;top:411.5px;"></div>
<div class="inp" style="left:1124px;top:332.5px;width:124px;height:20px;"></div>
<div class="inp" style="left:1124px;top:362.5px;width:124px;height:20px;"></div>
<div class="abs" style="left:1028px;top:392.5px;width:234px;height:3px;background:#c6c6c6;"></div>
<div class="abs" style="left:1027px;top:448px;width:248px;height:1px;background:#cfcfcf;"></div>
<svg style="left:1035px;top:461px" width="12" height="12" viewBox="0 0 12 12"><circle cx="6" cy="6" r="5.3" fill="#111"/><rect x="5" y="5" width="2.2" height="4" fill="#fff"/><rect x="4.3" y="8.2" width="3.6" height="1" fill="#fff"/><rect x="4.3" y="5" width="2" height="1" fill="#fff"/><circle cx="6" cy="3.2" r="1.1" fill="#fff"/></svg>
<div class="btn" style="left:1144.3px;top:457.5px;width:59.6px;height:18.2px;"></div>
<div class="btn" style="left:1210.2px;top:457.5px;width:59.6px;height:18.2px;"></div>
<svg style="left:0;top:0" width="1280" height="500" viewBox="0 0 1280 500">
<defs><linearGradient id="gDir" x1="0" y1="0" x2="1" y2="1"><stop offset="0" stop-color="#f7a860"/><stop offset="1" stop-color="#e87828"/></linearGradient>
<linearGradient id="gNb" x1="0" y1="0" x2="1" y2="0"><stop offset="0" stop-color="#b8bcc6"/><stop offset="0.5" stop-color="#fafafc"/><stop offset="1" stop-color="#c4c8d0"/></linearGradient></defs>
<!-- start -->
<path d="M1124.8,245.5 V259.8" stroke="#162456" stroke-width="1.8" fill="none"/>
<path d="M1125.5,252.7 H1132" stroke="#222" stroke-width="1.1" fill="none"/>
<path d="M1130.4,250.4 L1133.6,252.7 L1130.4,255 Z" fill="#222"/>
<!-- direction -->
<polygon points="1122.6,275.4 1135.4,281 1135.4,290.4 1130,288 1122.6,283" fill="url(#gDir)" stroke="#8a3c08" stroke-width="0.8" stroke-linejoin="round"/>
<path d="M1123,289.4 L1131.4,282" stroke="#111" stroke-width="1.6" fill="none"/>
<path d="M1121.6,290.6 L1122.6,286.4 L1125.8,289.8 Z" fill="#111"/>
<path d="M1132.6,280.8 L1131.8,284.6 L1129,281.6 Z" fill="#111"/>
<!-- extent -->
<path d="M1121.8,305.3 V319.7 M1136,305.3 V319.7" stroke="#162456" stroke-width="1.8" fill="none"/>
<path d="M1124.6,312.6 H1133.2" stroke="#222" stroke-width="1" fill="none"/>
<path d="M1126.2,310.4 L1123.2,312.6 L1126.2,314.8 Z M1131.6,310.4 L1134.6,312.6 L1131.6,314.8 Z" fill="#222"/>
<!-- new body -->
<path d="M1122,408.5 Q1122,406.5 1124,406.5 H1133 Q1135,406.5 1135,408.5 V417.8 Q1135,419.8 1133,419.8 H1124 Q1122,419.8 1122,417.8 Z" fill="url(#gNb)" stroke="#3a3e4a" stroke-width="1"/>
<path d="M1122.2,408.8 Q1128.5,411.8 1134.8,408.8" fill="none" stroke="#3a3e4a" stroke-width="0.8"/>
<g stroke="#f07800" stroke-width="1.2" fill="none"><path d="M1134.2,403.2 V409.2 M1131.2,406.2 H1137.2 M1132.1,404.1 L1136.3,408.3 M1136.3,404.1 L1132.1,408.3"/></g>
<circle cx="1134.2" cy="406.2" r="1.1" fill="#ffe680"/>
</svg>

<!-- bottom -->
<div class="panel" style="left:4px;top:656px;width:300px;height:25px;box-sizing:border-box;border-left:1px solid #c9c9c9;border-right:1px solid #c9c9c9;border-bottom:1px solid #c9c9c9;"></div>
<svg style="left:282px;top:662.6px" width="12" height="12" viewBox="0 0 12 12"><circle cx="5.5" cy="5.8" r="4.5" fill="#262626"/><rect x="2.7" y="5" width="5.6" height="1.6" fill="#fff"/><rect x="4.7" y="3" width="1.6" height="5.6" fill="#fff"/></svg>
<div class="abs" style="left:299px;top:663px;width:1px;height:11px;background:#6a6a6a;"></div>
<div class="abs" style="left:301px;top:665px;width:1px;height:7px;background:#9a9a9a;"></div>
<div class="panel" style="left:513px;top:657px;width:253px;height:24px;"></div>
<svg style="left:0;top:0" width="1280" height="684" viewBox="0 0 1280 684">
<defs>
<linearGradient id="gLens" x1="0" y1="0" x2="0" y2="1"><stop offset="0" stop-color="#c4e0e0"/><stop offset="1" stop-color="#ffffff"/></linearGradient>
<linearGradient id="gGrid" x1="0" y1="0" x2="0" y2="1"><stop offset="0" stop-color="#4a4a50"/><stop offset="1" stop-color="#8f97ab"/></linearGradient>
</defs>
<!-- orbit -->
<g>
<ellipse cx="524" cy="669.4" rx="7.6" ry="3.1" fill="none" stroke="#222" stroke-width="1.2"/>
<path d="M523.2,676.2 V664.6 H521.6 L524.5,661 L527.4,664.6 H525.8 V676.2 Z" fill="#fff" stroke="#222" stroke-width="1" stroke-linejoin="round"/>
<path d="M528,671.8 Q531.6,671.2 531.6,669.4" fill="none" stroke="#222" stroke-width="1.2"/>
<path d="M521.4,670.4 L517.8,672.8 L521.4,675.2 Z M518,672.8 H523" fill="#111" stroke="#111" stroke-width="0.9"/>
</g>
<!-- look at -->
<g stroke-linejoin="round">
<polygon points="551,666.2 554.7,661.6 557.8,664.2 561.8,662.2 562.3,666.2" fill="#d8dae0" stroke="#2f3340" stroke-width="1"/>
<rect x="549.5" y="666.2" width="15.3" height="10.2" fill="#fafafa" stroke="#2f3340" stroke-width="1.2"/>
<rect x="552.7" y="669.3" width="9" height="4.4" fill="#9aa2b6" stroke="#2f3340" stroke-width="1"/>
</g>
<!-- hand -->
<g>
<path d="M579.6,676.6 Q577.2,673 575.8,670.4 Q575.4,669.2 576.6,669.2 Q577.8,669.3 579.4,671.4 L579.6,671.2 L578.6,664.2 Q578.5,663 579.5,663 Q580.5,663 580.8,664.2 L581.6,668.2 L581.4,662.4 Q581.4,661.2 582.5,661.2 Q583.6,661.2 583.7,662.4 L584.2,668 L584.9,662.8 Q585,661.8 586,661.9 Q587,662 587,663.2 L586.8,668.6 L588.4,664.8 Q588.8,663.8 589.8,664.2 Q590.6,664.6 590.4,665.8 L588.8,672.4 Q588.2,675 586.8,676.6 Z" fill="#fff" stroke="#2a2a2a" stroke-width="1" stroke-linejoin="round"/>
</g>
<!-- zoom -->
<g>
<path d="M608.6,670.8 L613,675" stroke="#2a2a2a" stroke-width="2.4" stroke-linecap="round"/>
<circle cx="605.4" cy="667.7" r="4.1" fill="url(#gLens)" stroke="#2a2a2a" stroke-width="1.2"/>
<path d="M612.6,663.4 H616.8 M614.7,661.3 V665.5 M612.6,667.6 H616.8" stroke="#222" stroke-width="1" fill="none"/>
</g>
<!-- zoom window -->
<g>
<rect x="627.2" y="661.2" width="15" height="15" fill="none" stroke="#333" stroke-width="1" stroke-dasharray="2 1.6"/>
<path d="M637.4,671.6 L641.8,675.8" stroke="#2a2a2a" stroke-width="2.6" stroke-linecap="round"/>
<circle cx="633.4" cy="667.4" r="5.9" fill="url(#gLens)" stroke="#2a2a2a" stroke-width="1.3"/>
</g>
<!-- display -->
<g>
<rect x="668.4" y="661.4" width="15.4" height="12" rx="1.2" fill="#f4f4f6" stroke="#2f2f33" stroke-width="1.1"/>
<rect x="670.5" y="663.5" width="11.3" height="7.8" rx="0.6" fill="#8fb0e2" stroke="#1b3a84" stroke-width="1"/>
<path d="M674.4,673.4 h3.6 l1.2,2.8 h-6 z" fill="#fff" stroke="#2f2f33" stroke-width="0.9" stroke-linejoin="round"/>
</g>
<!-- grid -->
<g>
<rect x="699.6" y="661.4" width="15" height="15" rx="0.8" fill="url(#gGrid)" stroke="#333" stroke-width="0.8"/>
<rect x="701.20" y="663.00" width="1.4" height="1.4" fill="#fff" opacity="1.00"/><rect x="701.20" y="665.70" width="1.4" height="1.4" fill="#fff" opacity="0.92"/><rect x="701.20" y="668.40" width="1.4" height="1.4" fill="#fff" opacity="0.84"/><rect x="701.20" y="671.10" width="1.4" height="1.4" fill="#fff" opacity="0.76"/><rect x="701.20" y="673.80" width="1.4" height="1.4" fill="#fff" opacity="0.68"/><rect x="703.90" y="663.00" width="1.4" height="1.4" fill="#fff" opacity="1.00"/><rect x="703.90" y="665.70" width="1.4" height="1.4" fill="#fff" opacity="0.92"/><rect x="703.90" y="668.40" width="1.4" height="1.4" fill="#fff" opacity="0.84"/><rect x="703.90" y="671.10" width="1.4" height="1.4" fill="#fff" opacity="0.76"/><rect x="703.90" y="673.80" width="1.4" height="1.4" fill="#fff" opacity="0.68"/><rect x="706.60" y="663.00" width="1.4" height="1.4" fill="#fff" opacity="1.00"/><rect x="706.60" y="665.70" width="1.4" height="1.4" fill="#fff" opacity="0.92"/><rect x="706.60" y="668.40" width="1.4" height="1.4" fill="#fff" opacity="0.84"/><rect x="706.60" y="671.10" width="1.4" height="1.4" fill="#fff" opacity="0.76"/><rect x="706.60" y="673.80" width="1.4" height="1.4" fill="#fff" opacity="0.68"/><rect x="709.30" y="663.00" width="1.4" height="1.4" fill="#fff" opacity="1.00"/><rect x="709.30" y="665.70" width="1.4" height="1.4" fill="#fff" opacity="0.92"/><rect x="709.30" y="668.40" width="1.4" height="1.4" fill="#fff" opacity="0.84"/><rect x="709.30" y="671.10" width="1.4" height="1.4" fill="#fff" opacity="0.76"/><rect x="709.30" y="673.80" width="1.4" height="1.4" fill="#fff" opacity="0.68"/><rect x="712.00" y="663.00" width="1.4" height="1.4" fill="#fff" opacity="1.00"/><rect x="712.00" y="665.70" width="1.4" height="1.4" fill="#fff" opacity="0.92"/><rect x="712.00" y="668.40" width="1.4" height="1.4" fill="#fff" opacity="0.84"/><rect x="712.00" y="671.10" width="1.4" height="1.4" fill="#fff" opacity="0.76"/><rect x="712.00" y="673.80" width="1.4" height="1.4" fill="#fff" opacity="0.68"/>
</g>
<!-- viewports -->
<g fill="#a3c2ea" stroke="#1b3a84" stroke-width="1.1">
<rect x="730.4" y="662.2" width="6.4" height="5.6" rx="0.6"/><rect x="738.2" y="662.2" width="6.4" height="5.6" rx="0.6"/>
<rect x="730.4" y="669.2" width="6.4" height="5.6" rx="0.6"/><rect x="738.2" y="669.2" width="6.4" height="5.6" rx="0.6"/>
</g>
<g fill="#c4d8f2"><rect x="732" y="663.8" width="3.2" height="2.4"/><rect x="739.8" y="663.8" width="3.2" height="2.4"/><rect x="732" y="670.8" width="3.2" height="2.4"/><rect x="739.8" y="670.8" width="3.2" height="2.4"/></g>
</svg>
<div class="arr" style="left:537px;top:667px;"></div>
<div class="arr" style="left:648px;top:667px;"></div>
<div class="arr" style="left:686.2px;top:667px;"></div>
<div class="arr" style="left:717.2px;top:667px;"></div>
<div class="arr" style="left:748px;top:667px;"></div>

<!-- text -->
<div class="t" style="left:51.0px;top:26.0px;font-size:11.5px;font-weight:bold;color:#3a3a3a;transform:scaleX(0.9631);transform-origin:0 50%;">MODEL</div>
<div class="t" style="left:169.0px;top:48.0px;font-size:11.5px;font-weight:normal;color:#3a3a3a;transform:scaleX(0.8788);transform-origin:0 50%;-webkit-text-stroke:0.3px #3a3a3a;">SKETCH</div>
<div class="t" style="left:283.6px;top:48.0px;font-size:11.5px;font-weight:normal;color:#3a3a3a;transform:scaleX(0.8953);transform-origin:0 50%;-webkit-text-stroke:0.3px #3a3a3a;">CREATE</div>
<div class="t" style="left:368.4px;top:48.0px;font-size:11.5px;font-weight:normal;color:#3a3a3a;transform:scaleX(0.9299);transform-origin:0 50%;-webkit-text-stroke:0.3px #3a3a3a;">MODIFY</div>
<div class="t" style="left:445.0px;top:48.0px;font-size:11.5px;font-weight:normal;color:#3a3a3a;transform:scaleX(0.8548);transform-origin:0 50%;-webkit-text-stroke:0.3px #3a3a3a;">ASSEMBLE</div>
<div class="t" style="left:535.0px;top:48.0px;font-size:11.5px;font-weight:normal;color:#3a3a3a;transform:scaleX(0.9002);transform-origin:0 50%;-webkit-text-stroke:0.3px #3a3a3a;">CONSTRUCT</div>
<div class="t" style="left:633.6px;top:48.0px;font-size:11.5px;font-weight:normal;color:#3a3a3a;transform:scaleX(0.8627);transform-origin:0 50%;-webkit-text-stroke:0.3px #3a3a3a;">INSPECT</div>
<div class="t" style="left:707.6px;top:48.0px;font-size:11.5px;font-weight:normal;color:#3a3a3a;transform:scaleX(0.8911);transform-origin:0 50%;-webkit-text-stroke:0.3px #3a3a3a;">INSERT</div>
<div class="t" style="left:776.4px;top:48.0px;font-size:11.5px;font-weight:normal;color:#3a3a3a;transform:scaleX(0.9081);transform-origin:0 50%;-webkit-text-stroke:0.3px #3a3a3a;">MAKE</div>
<div class="t" style="left:836.0px;top:48.0px;font-size:11.5px;font-weight:normal;color:#3a3a3a;transform:scaleX(0.9427);transform-origin:0 50%;-webkit-text-stroke:0.3px #3a3a3a;">ADD–INS</div>
<div class="t" style="left:915.0px;top:48.0px;font-size:11.5px;font-weight:normal;color:#3a3a3a;transform:scaleX(0.8179);transform-origin:0 50%;-webkit-text-stroke:0.3px #3a3a3a;">SELECT</div>
<div class="t" style="left:29.0px;top:71.0px;font-size:11.5px;font-weight:normal;color:#3a3a3a;transform:scaleX(0.8414);transform-origin:0 50%;">BROWSER</div>
<div class="t" style="left:98.0px;top:99.0px;font-size:11.5px;font-weight:bold;color:#ffffff;transform:scaleX(0.9783);transform-origin:0 50%;">Base File_Working_Resized_/...</div>
<div class="t" style="left:91.0px;top:123.0px;font-size:11.5px;font-weight:normal;color:#2c2c2c;letter-spacing:0.166px;">Document Settings</div>
<div class="t" style="left:91.0px;top:147.0px;font-size:11.5px;font-weight:normal;color:#2c2c2c;letter-spacing:0.023px;">Named Views</div>
<div class="t" style="left:91.0px;top:171.0px;font-size:11.5px;font-weight:normal;color:#2c2c2c;transform:scaleX(0.9794);transform-origin:0 50%;">Selection Sets</div>
<div class="t" style="left:116.0px;top:195.0px;font-size:11.5px;font-weight:normal;color:#2c2c2c;letter-spacing:0.385px;">Origin</div>
<div class="t" style="left:116.0px;top:219.0px;font-size:11.5px;font-weight:normal;color:#2c2c2c;transform:scaleX(0.9723);transform-origin:0 50%;">Sketches</div>
<div class="t" style="left:116.0px;top:243.0px;font-size:11.5px;font-weight:normal;color:#2c2c2c;letter-spacing:0.328px;">Construction</div>
<div class="t" style="left:116.0px;top:267.0px;font-size:11.5px;font-weight:normal;color:#2c2c2c;letter-spacing:0.472px;">Top:1</div>
<div class="t" style="left:116.0px;top:291.0px;font-size:11.5px;font-weight:normal;color:#2c2c2c;transform:scaleX(0.9494);transform-origin:0 50%;">Base:1</div>
<div class="t" style="left:29.0px;top:660.0px;font-size:11.5px;font-weight:normal;color:#3a3a3a;transform:scaleX(0.9241);transform-origin:0 50%;">COMMENTS</div>
<div class="t" style="left:1050.0px;top:661.0px;font-size:11.5px;font-weight:bold;color:#333;letter-spacing:0.310px;">1 Profile | Area : 2.880E+04 mm^2</div>
<div class="t" style="left:1051.6px;top:187.5px;font-size:11.5px;font-weight:normal;color:#3a3a3a;transform:scaleX(0.9024);transform-origin:0 50%;">EDIT FEATURE</div>
<div class="t" style="left:1039.3px;top:215.0px;font-size:11.5px;font-weight:normal;color:#2c2c2c;letter-spacing:0.013px;">Profile</div>
<div class="t" style="left:1039.3px;top:245.0px;font-size:11.5px;font-weight:normal;color:#2c2c2c;transform:scaleX(0.9878);transform-origin:0 50%;">Start</div>
<div class="t" style="left:1039.3px;top:275.0px;font-size:11.5px;font-weight:normal;color:#2c2c2c;letter-spacing:0.290px;">Direction</div>
<div class="t" style="left:1039.3px;top:305.0px;font-size:11.5px;font-weight:normal;color:#2c2c2c;letter-spacing:0.015px;">Extent</div>
<div class="t" style="left:1039.3px;top:335.0px;font-size:11.5px;font-weight:normal;color:#2c2c2c;transform:scaleX(0.9989);transform-origin:0 50%;">Distance</div>
<div class="t" style="left:1039.3px;top:365.0px;font-size:11.5px;font-weight:normal;color:#2c2c2c;letter-spacing:0.241px;">Taper Angle</div>
<div class="t" style="left:1039.3px;top:405.0px;font-size:11.5px;font-weight:normal;color:#2c2c2c;letter-spacing:0.165px;">Operation</div>
<div class="t" style="left:1140.4px;top:215.0px;font-size:11.5px;font-weight:bold;color:#fff;transform:scaleX(0.9456);transform-origin:0 50%;">1 selected</div>
<div class="t" style="left:1140.9px;top:245.0px;font-size:11.5px;font-weight:normal;color:#2c2c2c;letter-spacing:0.014px;">Profile Plane</div>
<div class="t" style="left:1140.9px;top:275.0px;font-size:11.5px;font-weight:normal;color:#2c2c2c;transform:scaleX(0.9655);transform-origin:0 50%;">One Side</div>
<div class="t" style="left:1140.9px;top:305.0px;font-size:11.5px;font-weight:normal;color:#2c2c2c;letter-spacing:0.106px;">Distance</div>
<div class="t" style="left:1127.4px;top:335.0px;font-size:11.5px;font-weight:normal;color:#2c2c2c;letter-spacing:0.312px;">2 mm</div>
<div class="t" style="left:1127.4px;top:365.0px;font-size:11.5px;font-weight:normal;color:#2c2c2c;letter-spacing:0.232px;">0.0 deg</div>
<div class="t" style="left:1141.3px;top:405.0px;font-size:11.5px;font-weight:normal;color:#2c2c2c;transform:scaleX(0.9729);transform-origin:0 50%;">New Body</div>
<div class="t" style="left:1165.5px;top:458.7px;font-size:12px;font-weight:normal;color:#2c2c2c;transform:scaleX(0.9802);transform-origin:0 50%;">OK</div>
<div class="t" style="left:1220.5px;top:458.7px;font-size:12px;font-weight:normal;color:#2c2c2c;letter-spacing:0.273px;">Cancel</div>
<div class="t" style="left:813.8px;top:434.3px;font-size:12px;font-weight:normal;color:#111;transform:scaleX(0.9800);transform-origin:0 50%;">2 mm</div>
</body></html>
